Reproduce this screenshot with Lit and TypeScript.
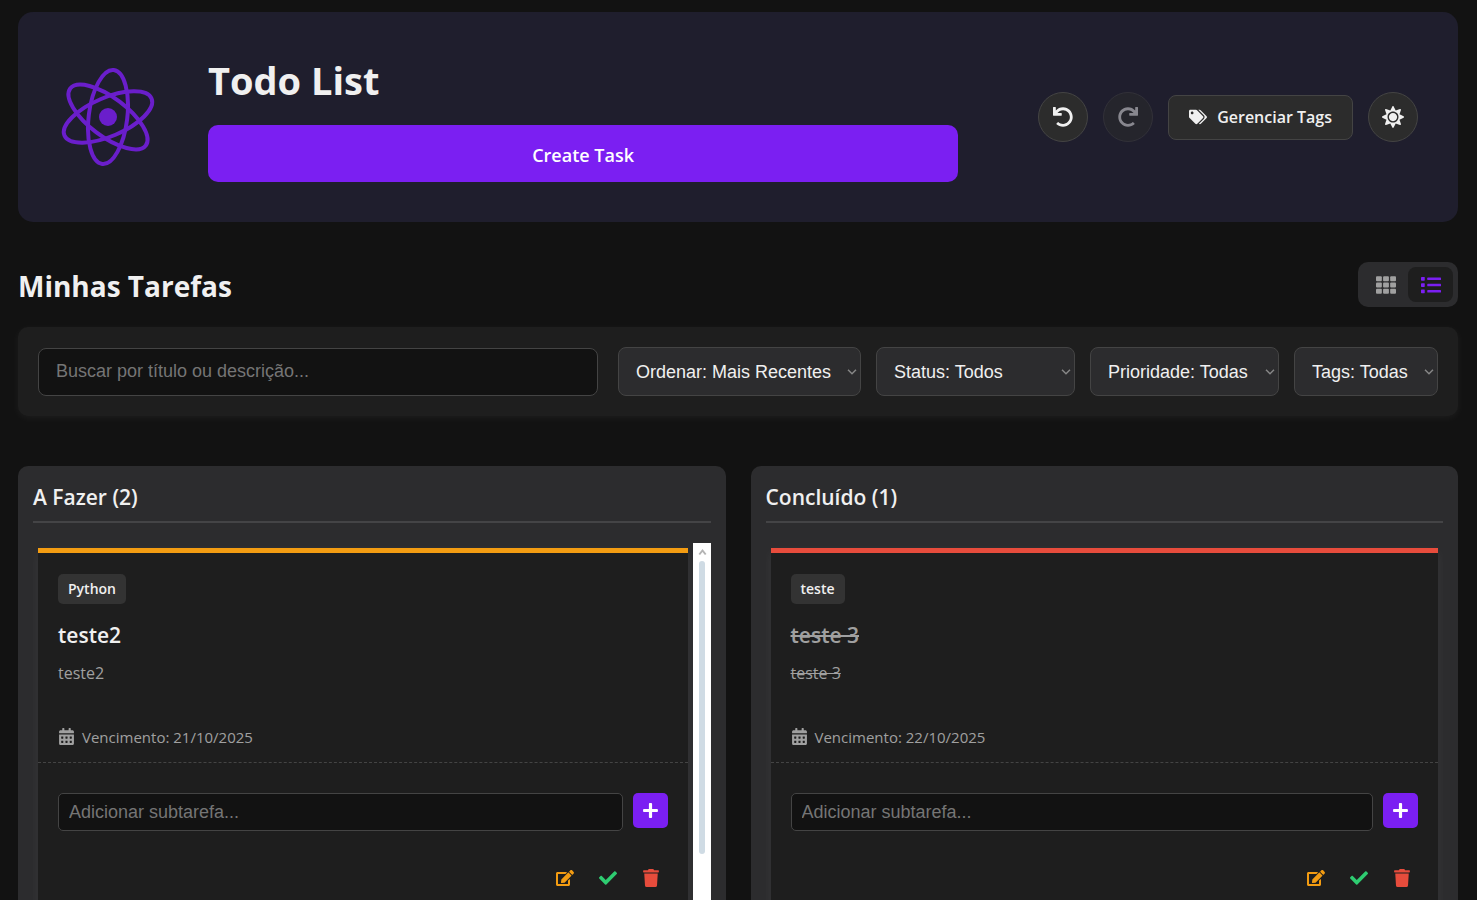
import { LitElement, html, css, svg, nothing } from "lit";
import { customElement, property, state } from "lit/decorators.js";
import { classMap } from "lit/directives/class-map.js";

interface Task {
  id: number;
  tag: string;
  title: string;
  text: string;
  due: string;
  priority: "media" | "alta";
  done: boolean;
}

const UNDO =
  "M212.333 224.333H12c-6.627 0-12-5.373-12-12V12C0 5.373 5.373 0 12 0h48c6.627 0 12 5.373 12 12v78.112C117.773 39.279 184.26 7.47 258.175 8.007c136.906.994 246.448 111.623 246.157 248.532C504.041 393.258 393.12 504 256.333 504c-64.089 0-122.496-24.313-166.51-64.215-5.099-4.622-5.334-12.554-.467-17.42l33.967-33.967c4.474-4.474 11.662-4.717 16.401-.525C170.76 415.336 211.58 432 256.333 432c97.268 0 176-78.716 176-176 0-97.267-78.716-176-176-176-58.496 0-110.28 28.476-142.274 72.333h98.274c6.627 0 12 5.373 12 12v48c0 6.627-5.373 12-12 12z";

const cell = (x: number, y: number) =>
  `M${x} ${y}c0-6.6 5.4-12 12-12h40c6.6 0 12 5.4 12 12v40c0 6.6-5.4 12-12 12h-40c-6.6 0-12-5.4-12-12z`;

const ICONS = {
  undo: { w: 512, body: svg`<path d=${UNDO} />` },
  redo: { w: 512, body: svg`<path d=${UNDO} transform="translate(512 0) scale(-1 1)" />` },
  tags: {
    w: 640,
    body: svg`<path d="M497.941 225.941L286.059 14.059A48 48 0 0 0 252.118 0H48C21.49 0 0 21.49 0 48v204.118a48 48 0 0 0 14.059 33.941l211.882 211.882c18.744 18.745 49.136 18.746 67.882 0l204.118-204.118c18.745-18.745 18.745-49.137 0-67.882zM112 160c-26.51 0-48-21.49-48-48s21.49-48 48-48 48 21.49 48 48-21.49 48-48 48zm513.941 133.823L421.823 497.941c-18.745 18.745-49.137 18.745-67.882 0l-.36-.36L527.64 323.522c16.999-16.999 26.36-39.6 26.36-63.64s-9.362-46.641-26.36-63.64L331.397 0h48.721a48 48 0 0 1 33.941 14.059l211.882 211.882c18.745 18.745 18.745 49.137 0 67.882z" />`,
  },
  sun: {
    w: 512,
    body: svg`<path d="M256 160c-52.9 0-96 43.1-96 96s43.1 96 96 96 96-43.1 96-96-43.1-96-96-96zm246.4 80.5l-94.7-47.3 33.5-100.4c4.5-13.6-8.4-26.5-21.9-21.9l-100.4 33.5-47.4-94.8c-6.4-12.8-24.6-12.8-31 0l-47.3 94.7L92.7 70.8c-13.6-4.5-26.5 8.4-21.9 21.9l33.5 100.4-94.7 47.4c-12.8 6.4-12.8 24.6 0 31l94.7 47.3-33.5 100.5c-4.5 13.6 8.4 26.5 21.9 21.9l100.4-33.5 47.3 94.7c6.4 12.8 24.6 12.8 31 0l47.3-94.7 100.4 33.5c13.6 4.5 26.5-8.4 21.9-21.9l-33.5-100.4 94.7-47.3c13-6.5 13-24.7.2-31.1zm-155.9 106c-49.9 49.9-131.1 49.9-181 0-49.9-49.9-49.9-131.1 0-181 49.9-49.9 131.1-49.9 181 0 49.9 49.9 49.9 131.1 0 181z" />`,
  },
  grid: {
    w: 512,
    body: [0, 1, 2].map((r) =>
      [0, 1, 2].map(
        (c) => svg`<rect x=${c * 181.33} y=${32 + r * 160} width="149.33" height="128" rx="24" />`
      )
    ),
  },
  list: {
    w: 512,
    body: [48, 208, 368].map(
      (y) => svg`<rect x="0" y=${y} width="96" height="96" rx="16" /><rect x="160" y=${y + 16} width="352" height="64" rx="16" />`
    ),
  },
  calendar: {
    w: 448,
    body: svg`<path fill-rule="evenodd" d=${
      "M0 464c0 26.5 21.5 48 48 48h352c26.5 0 48-21.5 48-48V192H0v272z" +
      [64, 192, 320].map((x) => cell(x, 268) + cell(x, 396)).join("") +
      "M400 64h-48V16c0-8.8-7.2-16-16-16h-32c-8.8 0-16 7.2-16 16v48H160V16c0-8.8-7.2-16-16-16h-32c-8.8 0-16 7.2-16 16v48H48C21.5 64 0 85.5 0 112v48h448v-48c0-26.5-21.5-48-48-48z"
    } />`,
  },
  plus: {
    w: 448,
    body: svg`<path d="M416 208H272V64c0-17.67-14.33-32-32-32h-32c-17.67 0-32 14.33-32 32v144H32c-17.67 0-32 14.33-32 32v32c0 17.67 14.33 32 32 32h144v144c0 17.67 14.33 32 32 32h32c17.67 0 32-14.33 32-32V304h144c17.67 0 32-14.33 32-32v-32c0-17.67-14.33-32-32-32z" />`,
  },
  edit: {
    w: 576,
    body: svg`<path d="M402.6 83.2l90.2 90.2c3.8 3.8 3.8 10 0 13.8L274.4 405.6l-92.8 10.3c-12.4 1.4-22.9-9.1-21.5-21.5l10.3-92.8L388.8 83.2c3.8-3.8 10-3.8 13.8 0zm162-22.9l-48.8-48.8c-15.2-15.2-39.9-15.2-55.2 0l-35.4 35.4c-3.8 3.8-3.8 10 0 13.8l90.2 90.2c3.8 3.8 10 3.8 13.8 0l35.4-35.4c15.2-15.3 15.2-40 0-55.2zM384 346.2V448H64V128h229.8c3.2 0 6.2-1.3 8.5-3.5l40-40c7.6-7.6 2.2-20.5-8.5-20.5H48C21.5 64 0 85.5 0 112v352c0 26.5 21.5 48 48 48h352c26.5 0 48-21.5 48-48V306.2c0-10.7-12.9-16-20.5-8.5l-40 40c-2.2 2.3-3.5 5.3-3.5 8.5z" />`,
  },
  check: {
    w: 512,
    body: svg`<path d="M173.898 439.404l-166.4-166.4c-9.997-9.997-9.997-26.206 0-36.204l36.203-36.204c9.997-9.998 26.207-9.998 36.204 0L192 312.69 432.095 72.596c9.997-9.997 26.207-9.997 36.204 0l36.203 36.204c9.997 9.997 9.997 26.206 0 36.204l-294.4 294.401c-9.998 9.997-26.207 9.997-36.204-.001z" />`,
  },
  trash: {
    w: 448,
    body: svg`<path d="M432 32H312l-9.4-18.7A24 24 0 0 0 281.1 0H166.8a23.72 23.72 0 0 0-21.4 13.3L136 32H16A16 16 0 0 0 0 48v32a16 16 0 0 0 16 16h416a16 16 0 0 0 16-16V48a16 16 0 0 0-16-16zM53.2 467a48 48 0 0 0 47.9 45h245.8a48 48 0 0 0 47.9-45L416 128H32z" />`,
  },
};

const icon = (name: keyof typeof ICONS) => html`
  <svg class="icon" viewBox="0 0 ${ICONS[name].w} 512" aria-hidden="true">${ICONS[name].body}</svg>
`;

const shared = css`
  * {
    box-sizing: border-box;
  }
  h1,
  h2,
  h3,
  h4,
  p {
    margin: 0;
  }
  button {
    display: flex;
    align-items: center;
    justify-content: center;
    margin: 0;
    padding: 0;
    border: none;
    font-family: inherit;
    cursor: pointer;
  }
  .icon {
    display: block;
    flex: none;
    width: 1em;
    height: 1em;
    fill: currentColor;
  }
`;

@customElement("task-card")
export class TaskCard extends LitElement {
  @property({ attribute: false }) task!: Task;

  static styles = [
    shared,
    css`
      :host {
        display: block;
      }
      .card {
        background: #1e1e1e;
        border-top: 5px solid #f39c12;
        box-shadow: 0 4px 12px rgba(255, 255, 255, 0.05);
      }
      .alta {
        border-top-color: #e74c3c;
      }
      .body {
        padding: 21px 20px 12px;
        border-bottom: 1px dashed #444;
      }
      .tag {
        display: inline-block;
        padding: 0 10px;
        border-radius: 5px;
        background: #333;
        font-size: 14px;
        font-weight: 600;
        line-height: 30px;
        vertical-align: top;
      }
      .title {
        margin-top: 16px;
        font-size: 21px;
        font-weight: 600;
        line-height: 30px;
      }
      .text {
        margin-top: 8px;
        color: #a0a0a0;
        font-size: 16px;
        line-height: 30px;
      }
      .done {
        color: #a0a0a0;
        text-decoration: line-through;
      }
      .due {
        display: flex;
        align-items: center;
        gap: 7px;
        margin-top: 37px;
        color: #a0a0a0;
        font-size: 15px;
        line-height: 25px;
      }
      .due .icon {
        margin-bottom: 2px;
        font-size: 17px;
      }
      .subtask {
        display: flex;
        align-items: flex-start;
        gap: 10px;
        padding: 30px 20px;
      }
      .field {
        flex: 1;
        min-width: 0;
        height: 38px;
        padding: 0 10px;
        border: 1px solid #444;
        border-radius: 5px;
        background: #121212;
        color: #f0f0f0;
        font-family: "Liberation Sans", Arial, sans-serif;
        font-size: 18px;
      }
      .field::placeholder {
        color: #757575;
      }
      .add {
        width: 35px;
        height: 35px;
        border-radius: 5px;
        background: #7b1ff2;
        color: #fff;
        font-size: 17px;
      }
      .actions {
        display: flex;
        justify-content: flex-end;
        gap: 10px;
        padding: 0 20px 20px;
      }
      .action {
        width: 33px;
        height: 33px;
        background: none;
        font-size: 18px;
      }
      .edit {
        color: #f39c12;
      }
      .check {
        color: #2ecc71;
      }
      .trash {
        color: #e74c3c;
      }
    `,
  ];

  render() {
    const t = this.task;
    const done = { done: t.done };
    return html`
      <article class=${classMap({ card: true, alta: t.priority === "alta" })}>
        <div class="body">
          <span class="tag">${t.tag}</span>
          <h4 class="title"><span class=${classMap(done)}>${t.title}</span></h4>
          <p class="text"><span class=${classMap(done)}>${t.text}</span></p>
          <p class="due">${icon("calendar")}<span>Vencimento: ${t.due}</span></p>
        </div>
        <div class="subtask">
          <input class="field" type="text" aria-label="Adicionar subtarefa" placeholder="Adicionar subtarefa..." />
          <button class="add" aria-label="Adicionar">${icon("plus")}</button>
        </div>
        <div class="actions">
          <button class="action edit" aria-label="Editar">${icon("edit")}</button>
          <button class="action check" aria-label="Concluir">${icon("check")}</button>
          <button class="action trash" aria-label="Excluir">${icon("trash")}</button>
        </div>
      </article>
    `;
  }
}

@customElement("task-column")
export class TaskColumn extends LitElement {
  @property() heading = "";
  @property({ attribute: false }) tasks: Task[] = [];

  static styles = [
    shared,
    css`
      :host {
        display: block;
        min-width: 0;
      }
      .column {
        padding: 15px;
        border-radius: 10px;
        background: #2c2c2e;
      }
      .heading {
        padding-bottom: 8px;
        border-bottom: 2px solid #444446;
        font-size: 21px;
        font-weight: 600;
        line-height: 32px;
      }
      .scroller {
        display: flex;
        max-height: 600px;
        margin-top: 20px;
        overflow: hidden;
      }
      .list {
        display: flex;
        flex: 1;
        flex-direction: column;
        gap: 20px;
        min-width: 0;
        padding: 5px;
        overflow: hidden;
      }
      .bar {
        display: flex;
        flex: none;
        flex-direction: column;
        align-items: center;
        width: 18px;
        background: #fff;
      }
      .arrow {
        width: 18px;
        height: 18px;
        fill: none;
        stroke: #b4b4b4;
        stroke-width: 2;
      }
      .thumb {
        width: 6px;
        height: 293px;
        border-radius: 3px;
        background: #cfdbe4;
      }
    `,
  ];

  render() {
    return html`
      <section class="column">
        <h3 class="heading">${this.heading} (${this.tasks.length})</h3>
        <div class="scroller">
          <div class="list">${this.tasks.map((t) => html`<task-card .task=${t}></task-card>`)}</div>
          ${this.tasks.length > 1
            ? html`<div class="bar" aria-hidden="true">
                <svg class="arrow" viewBox="0 0 18 18"><path d="M6.300 11.500L9.500 7.500L12.700 11.500" /></svg>
                <div class="thumb"></div>
              </div>`
            : nothing}
        </div>
      </section>
    `;
  }
}

@customElement("app-root")
export class AppRoot extends LitElement {
  @state() private view: "grid" | "list" = "list";

  private tasks: Task[] = [
    { id: 1, tag: "Python", title: "teste2", text: "teste2", due: "21/10/2025", priority: "media", done: false },
    { id: 2, tag: "Python", title: "teste", text: "teste", due: "21/10/2025", priority: "alta", done: false },
    { id: 3, tag: "teste", title: "teste 3", text: "teste 3", due: "22/10/2025", priority: "alta", done: true },
  ];

  private filters = [
    { label: "Ordenar", options: ["Mais Recentes", "Mais Antigas"] },
    { label: "Status", options: ["Todos", "Pendentes", "Concluídas"] },
    { label: "Prioridade", options: ["Todas", "Alta", "Média", "Baixa"] },
    { label: "Tags", options: ["Todas", "teste"] },
  ];

  static styles = [
    shared,
    css`
      :host {
        display: block;
        min-height: 100vh;
        background: #121212;
        color: #f0f0f0;
        font-family: "Segoe UI", "Open Sans", "Noto Sans", sans-serif;
      }
      .page {
        max-width: 1600px;
        margin: 0 auto;
        padding: 12px 19px 12px 18px;
      }
      .hero {
        display: flex;
        align-items: center;
        gap: 80px;
        min-height: 210px;
        padding: 40px;
        border-radius: 15px;
        background: #1f1e2d;
      }
      .brand {
        display: flex;
        flex: 1;
        align-items: center;
        gap: 50px;
      }
      .logo {
        flex: none;
        width: 100px;
        height: 100px;
        fill: none;
        stroke: #6a1ecb;
        stroke-width: 4;
      }
      .core {
        fill: #6a1ecb;
        stroke: none;
      }
      .intro {
        flex: 1;
      }
      .name {
        font-size: 38px;
        font-weight: 700;
        line-height: 57px;
      }
      .create {
        width: 100%;
        height: 57px;
        margin-top: 16px;
        padding-top: 2px;
        border-radius: 10px;
        background: #7b1ff2;
        color: #fff;
        font-size: 18px;
        font-weight: 600;
      }
      .tools {
        display: flex;
        align-items: center;
        gap: 15px;
      }
      .tool {
        border: 1px solid #444;
        background: #2c2c2c;
        color: #f0f0f0;
      }
      .round {
        width: 50px;
        height: 50px;
        border-radius: 25px;
        font-size: 20px;
      }
      .sun {
        font-size: 22px;
      }
      .round:disabled {
        opacity: 0.5;
      }
      .manage {
        gap: 10px;
        height: 45px;
        padding: 0 20px;
        border-radius: 8px;
        font-size: 16px;
        font-weight: 600;
      }
      .manage .icon {
        font-size: 18px;
      }
      .topline {
        display: flex;
        align-items: center;
        justify-content: space-between;
        margin: 40px 0 20px;
      }
      .section {
        padding-top: 4px;
        font-size: 28px;
        font-weight: 700;
        line-height: 41px;
      }
      .toggle {
        display: flex;
        padding: 5px;
        border-radius: 10px;
        background: #2c2c2e;
      }
      .mode {
        width: 45px;
        height: 35px;
        border-radius: 8px;
        background: none;
        color: #a0a0a0;
        font-size: 20px;
      }
      .active {
        background: #1e1e1e;
        color: #7b1ff2;
      }
      .filters {
        display: flex;
        align-items: center;
        gap: 20px;
        padding: 20px;
        border-radius: 10px;
        background: #1e1e1e;
        box-shadow: 0 2px 8px rgba(255, 255, 255, 0.05);
      }
      .search,
      .filter {
        border: 1px solid #444;
        border-radius: 8px;
        color: #f0f0f0;
        font-family: "Liberation Sans", Arial, sans-serif;
        font-size: 18px;
      }
      .search {
        flex: 1;
        min-width: 0;
        height: 48px;
        padding: 0 17px;
        background: #121212;
      }
      .search::placeholder {
        color: #757575;
      }
      .selects {
        display: flex;
        gap: 15px;
      }
      .filter {
        height: 49px;
        padding: 0 28px 0 17px;
        appearance: none;
        background: #2c2c2e
          url("data:image/svg+xml,%3Csvg xmlns='http://www.w3.org/2000/svg' width='10' height='6' fill='none' stroke='%23858585' stroke-width='1.5'%3E%3Cpath d='M1 .8l4 4 4-4'/%3E%3C/svg%3E")
          no-repeat right 3px center;
      }
      .board {
        display: grid;
        grid-template-columns: 1fr 1fr;
        align-items: start;
        gap: 25px;
        margin-top: 50px;
      }
    `,
  ];

  render() {
    return html`
      <main class="page">
        <header class="hero">
          <div class="brand">
            <svg class="logo" viewBox="-50 -50 100 100" aria-hidden="true">
              ${[37, 97, 157].map((a) => svg`<ellipse rx="47.300" ry="19.300" transform="rotate(${a})" />`)}
              <circle class="core" r="9" />
            </svg>
            <div class="intro">
              <h1 class="name">Todo List</h1>
              <button class="create">Create Task</button>
            </div>
          </div>
          <div class="tools">
            <button class="tool round" aria-label="Desfazer">${icon("undo")}</button>
            <button class="tool round" aria-label="Refazer" disabled>${icon("redo")}</button>
            <button class="tool manage">${icon("tags")}<span>Gerenciar Tags</span></button>
            <button class="tool round sun" aria-label="Tema claro">${icon("sun")}</button>
          </div>
        </header>

        <div class="topline">
          <h2 class="section">Minhas Tarefas</h2>
          <div class="toggle">
            ${(["grid", "list"] as const).map(
              (v) => html`<button
                class=${classMap({ mode: true, active: this.view === v })}
                aria-label=${v === "grid" ? "Grade" : "Lista"}
                @click=${() => (this.view = v)}
              >
                ${icon(v)}
              </button>`
            )}
          </div>
        </div>

        <div class="filters">
          <input class="search" type="text" aria-label="Buscar" placeholder="Buscar por título ou descrição..." />
          <div class="selects">
            ${this.filters.map(
              (f) => html`<select class="filter" aria-label=${f.label}>
                ${f.options.map((o) => html`<option>${f.label}: ${o}</option>`)}
              </select>`
            )}
          </div>
        </div>

        <div class="board">
          <task-column heading="A Fazer" .tasks=${this.tasks.filter((t) => !t.done)}></task-column>
          <task-column heading="Concluído" .tasks=${this.tasks.filter((t) => t.done)}></task-column>
        </div>
      </main>
    `;
  }
}
